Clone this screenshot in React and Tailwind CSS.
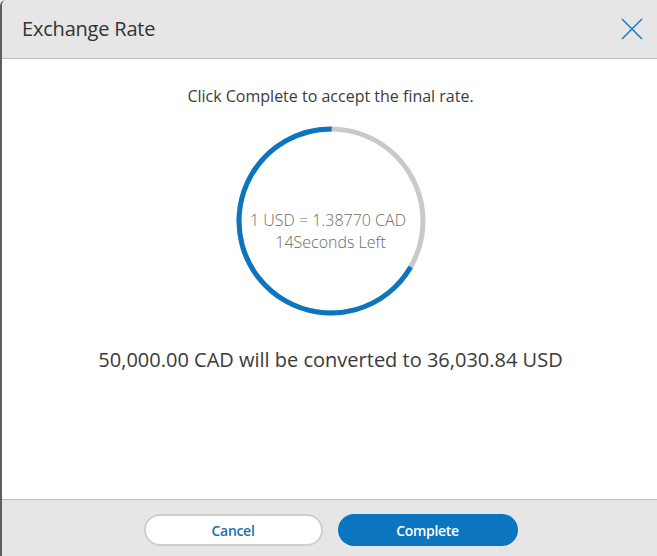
import React from "react";

export default function App() {
  const r = 92;
  const c = 2 * Math.PI * r;
  return (
    <div className="w-[657px] h-[556px] overflow-hidden bg-[#f0f0f0]" style={{ fontFamily: '"Open Sans", "Noto Sans", sans-serif' }}>
      <div className="w-[660px] h-[556px] flex flex-col border-l-2 border-[#5f5f5f] rounded-tl-[6px] overflow-hidden bg-white">
        <div className="h-[59px] shrink-0 bg-[#e6e6e6] border-b border-[#bdbdbd] flex items-center justify-between pl-[20px] pr-[11px]">
          <h1 className="text-[20px] text-[#333] tracking-[-0.2px]">Exchange Rate</h1>
          <button className="w-[24px] h-[24px] flex items-center justify-center mr-[5px]">
            <svg width="22" height="22" viewBox="0 0 22 22" fill="none" stroke="#1a7fc4" strokeWidth="1.6">
              <path d="M1 1 L21 21 M21 1 L1 21" />
            </svg>
          </button>
        </div>
        <div className="flex-1 flex flex-col items-center pr-[1px]">
          <p className="mt-[26px] text-[16px] text-[#3c3c3c] leading-[22px]">Click Complete to accept the final rate.</p>
          <div className="relative mt-[17px] w-[194px] h-[194px]">
            <svg width="194" height="194" viewBox="0 0 194 194" className="absolute inset-0">
              <circle cx="97" cy="97" r={r} fill="none" stroke="#c9c9c9" strokeWidth="5" />
              <circle cx="97" cy="97" r={r} fill="none" stroke="#0b76bf" strokeWidth="5"
                strokeDasharray={`${(c * 2) / 3} ${c}`} transform="rotate(30 97 97)" />
            </svg>
            <div className="absolute inset-0 flex flex-col items-center justify-center text-[16px] font-light text-[#6a6a6a] leading-[22px] pt-[20px]">
              <span className="pr-[5px]">1 USD = 1.38770 CAD</span>
              <span>14Seconds Left</span>
            </div>
          </div>
          <p className="mt-[29px] text-[20px] text-[#3a3a3a] leading-[26px]">50,000.00 CAD will be converted to 36,030.84 USD</p>
        </div>
        <div className="h-[57px] shrink-0 bg-[#e6e6e6] border-t border-[#bdbdbd] flex items-start justify-center gap-[15px] pt-[14px] pr-[1px]">
          <button className="w-[179px] h-[32px] rounded-full bg-white border-2 border-[#cfcfcf] text-[#1a6fb5] text-[14px] font-semibold tracking-[-0.3px]">Cancel</button>
          <button className="w-[180px] h-[32px] rounded-full bg-[#0b76bf] text-white text-[14px] font-semibold tracking-[-0.3px]">Complete</button>
        </div>
      </div>
    </div>
  );
}
